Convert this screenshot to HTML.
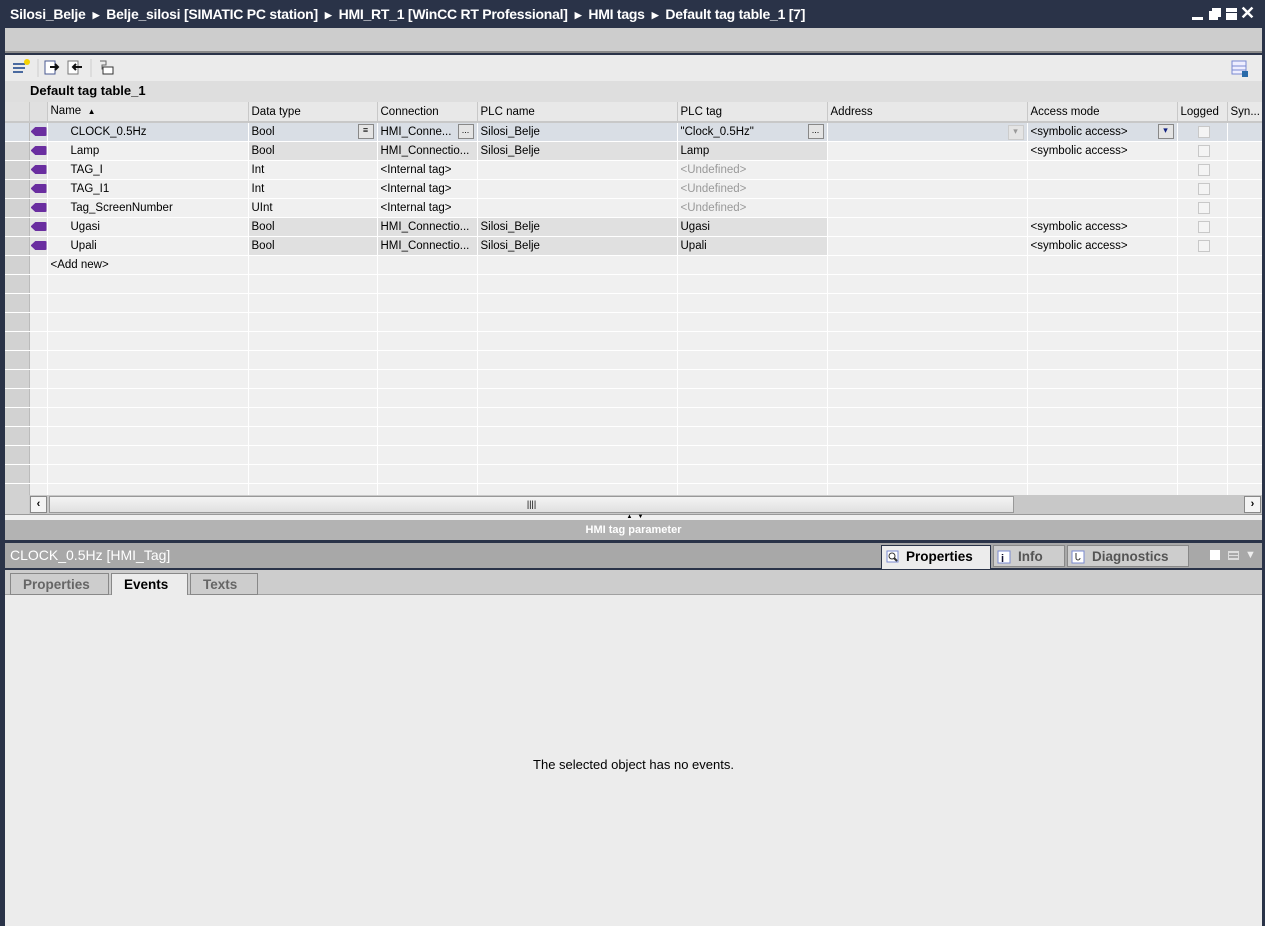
<!DOCTYPE html>
<html><head><meta charset="utf-8"><style>
*{box-sizing:border-box;margin:0;padding:0}
body{width:1265px;height:926px;overflow:hidden;background:#2a3348;font-family:"Liberation Sans",sans-serif;font-size:12px;color:#000;position:relative}
.abs{position:absolute}
#title{left:0;top:0;width:1265px;height:28px;color:#fff;font-size:14px;font-weight:bold;padding:6px 0 0 10px;letter-spacing:-0.25px;white-space:nowrap}
#title span.a{font-size:9px;margin:0 7px;position:relative;top:-1px}
#band{left:5px;top:28px;width:1257px;height:25px;background:#cdcdcd;border-bottom:2px solid #8a8a8a}
#tb{left:5px;top:55px;width:1257px;height:26px;background:#ebebeb}
#tt{left:5px;top:81px;width:1257px;height:21px;background:#dedede;font-weight:bold;font-size:13px;padding:2px 0 0 25px}
#grid{left:5px;top:102px;width:1257px;height:393px;overflow:hidden;background:#f0f0f0}
table{border-collapse:collapse;table-layout:fixed;width:1257px}
td{height:19px;line-height:18px;vertical-align:middle;border-right:1px solid #fff;border-bottom:1px solid #fff;padding:0 3px;white-space:nowrap;overflow:hidden;background:#f0f0f0;font-size:11.5px}
tr.h td{background:#e8e8e8;border-right:1px solid #c8c8c8;border-bottom:2px solid #c8c8c8;height:19px}
td.rh{background:#d2d2d2;border-right:1px solid #bbb}
td.ic{background:#e4e4e4;padding:0 1px}
td.g{background:#e0e0e0}
tr.sel td{background:#d9dee5}
td.u{color:#999}
.ico{display:inline-block;width:16px;height:9px;background:#6a2ea0;border-radius:1px 2px 2px 1px;position:relative;top:1px;clip-path:polygon(30% 0,100% 0,100% 100%,30% 100%,0 50%)}
.cb{display:inline-block;width:12px;height:12px;border:1px solid #c8c8c8;background:#f4f4f4;margin-left:17px;vertical-align:middle}
.btn{float:right;width:16px;height:15px;border:1px solid #888;background:#e4e4e4;font-size:9px;text-align:center;line-height:11px;margin-top:1px}
#sb{left:29px;top:495px;width:1233px;height:19px;background:#c8c8c8}
#spl{left:5px;top:514px;width:1257px;height:6px;background:#f0f0f0;border-top:1px solid #999}
#hp{left:5px;top:520px;width:1257px;height:20px;background:#b3b3b3;color:#fff;font-weight:bold;font-size:11px;text-align:center;padding-top:4px}
#ph{left:5px;top:543px;width:1257px;height:25px;background:#a8a8a8;color:#fff;font-size:14px;padding:4px 0 0 5px}
#tabs{left:5px;top:570px;width:1257px;height:25px;background:#cdcdcd;border-bottom:1px solid #a0a0a0}
.tab{position:absolute;top:3px;height:22px;border:1px solid #888;background:#cdcdcd;font-size:13.5px;font-weight:bold;color:#666;padding:3px 0 0 12px}
#content{left:5px;top:595px;width:1257px;height:331px;background:#ececec}
.ptab{position:absolute;top:3px;height:22px;font-size:13.5px;font-weight:bold;color:#333;padding:3px 0 0 24px;background:#cdcdcd;border:1px solid #888}
</style></head><body>
<div id="title" class="abs">Silosi_Belje<span class="a">▶</span>Belje_silosi [SIMATIC PC station]<span class="a">▶</span>HMI_RT_1 [WinCC RT Professional]<span class="a">▶</span>HMI tags<span class="a">▶</span>Default tag table_1 [7]</div>
<div class="abs" style="left:1192px;top:8px;width:60px;height:14px">
<div class="abs" style="left:0;top:9px;width:11px;height:3px;background:#fff"></div>
<div class="abs" style="left:17px;top:3px;width:9px;height:9px;background:#fff"></div><div class="abs" style="left:20px;top:0;width:9px;height:3px;background:#fff"></div><div class="abs" style="left:26px;top:0;width:3px;height:9px;background:#fff"></div>
<div class="abs" style="left:34px;top:0;width:11px;height:12px;background:#fff;border-top:3px solid #fff"><div style="margin-top:1px;height:1px;background:#2a3348"></div></div>
<div class="abs" style="left:48px;top:-4px;color:#fff;font-size:18px;font-weight:bold;line-height:18px">✕</div>
</div>
<div id="band" class="abs"></div>
<div id="tb" class="abs">
<svg width="110" height="26" style="position:absolute;left:5px;top:0">
<rect x="3" y="8" width="12" height="2" fill="#4a6aa0"/><rect x="3" y="12" width="12" height="2" fill="#4a6aa0"/><rect x="3" y="16" width="10" height="2" fill="#4a6aa0"/><circle cx="17" cy="7" r="3" fill="#f5d200"/>
<line x1="28" y1="4" x2="28" y2="22" stroke="#ccc"/>
<rect x="35" y="6" width="10" height="13" fill="#fff" stroke="#4a5a90"/><path d="M40 12h8M45 9l3 3-3 3" stroke="#111" stroke-width="2" fill="none"/>
<rect x="58" y="6" width="10" height="13" fill="#fff" stroke="#777"/><path d="M72 12h-9M66 9l-3 3 3 3" stroke="#111" stroke-width="2" fill="none"/>
<line x1="81" y1="4" x2="81" y2="22" stroke="#ccc"/>
<path d="M90 6h6v4h-4v4h10" stroke="#666" fill="none"/><rect x="93" y="12" width="10" height="7" fill="#fff" stroke="#333"/>
</svg>
<svg width="18" height="18" style="position:absolute;left:1226px;top:5px"><rect x="1" y="1" width="14" height="13" fill="#eef" stroke="#7a8ad0"/><line x1="1" y1="6" x2="15" y2="6" stroke="#7a8ad0"/><line x1="1" y1="10" x2="15" y2="10" stroke="#7a8ad0"/><rect x="11" y="11" width="6" height="6" fill="#2a6aa8"/></svg>
</div>
<div id="tt" class="abs">Default tag table_1</div>
<div id="grid" class="abs">
<table>
<colgroup><col style="width:24px"><col style="width:18px"><col style="width:201px"><col style="width:129px"><col style="width:100px"><col style="width:200px"><col style="width:150px"><col style="width:200px"><col style="width:150px"><col style="width:50px"><col style="width:35px"></colgroup>
<tr class="h"><td class="rh" style="background:#e0e0e0"></td><td style="background:#e0e0e0"></td><td>Name &nbsp;<span style="font-size:8px">▲</span></td><td>Data type</td><td>Connection</td><td>PLC name</td><td>PLC tag</td><td>Address</td><td>Access mode</td><td>Logged</td><td>Syn...</td></tr>
<tr class="sel"><td class="rh"></td><td class="ic"><span class="ico"></span></td><td style="padding-left:23px">CLOCK_0.5Hz</td><td>Bool<span class="btn">≡</span></td><td>HMI_Conne...<span class="btn">...</span></td><td>Silosi_Belje</td><td>"Clock_0.5Hz"<span class="btn">...</span></td><td><span class="btn" style="border-color:#ccc;color:#999">▾</span></td><td>&lt;symbolic access&gt;<span class="btn" style="color:#102080">▾</span></td><td><span class="cb"></span></td><td></td></tr>
<tr><td class="rh"></td><td class="ic"><span class="ico"></span></td><td style="padding-left:23px">Lamp</td><td class="g">Bool</td><td class="g">HMI_Connectio...</td><td class="g">Silosi_Belje</td><td class="g">Lamp</td><td></td><td>&lt;symbolic access&gt;</td><td><span class="cb"></span></td><td></td></tr>
<tr><td class="rh"></td><td class="ic"><span class="ico"></span></td><td style="padding-left:23px">TAG_I</td><td>Int</td><td>&lt;Internal tag&gt;</td><td></td><td class="u">&lt;Undefined&gt;</td><td></td><td></td><td><span class="cb"></span></td><td></td></tr>
<tr><td class="rh"></td><td class="ic"><span class="ico"></span></td><td style="padding-left:23px">TAG_I1</td><td>Int</td><td>&lt;Internal tag&gt;</td><td></td><td class="u">&lt;Undefined&gt;</td><td></td><td></td><td><span class="cb"></span></td><td></td></tr>
<tr><td class="rh"></td><td class="ic"><span class="ico"></span></td><td style="padding-left:23px">Tag_ScreenNumber</td><td>UInt</td><td>&lt;Internal tag&gt;</td><td></td><td class="u">&lt;Undefined&gt;</td><td></td><td></td><td><span class="cb"></span></td><td></td></tr>
<tr><td class="rh"></td><td class="ic"><span class="ico"></span></td><td style="padding-left:23px">Ugasi</td><td class="g">Bool</td><td class="g">HMI_Connectio...</td><td class="g">Silosi_Belje</td><td class="g">Ugasi</td><td></td><td>&lt;symbolic access&gt;</td><td><span class="cb"></span></td><td></td></tr>
<tr><td class="rh"></td><td class="ic"><span class="ico"></span></td><td style="padding-left:23px">Upali</td><td class="g">Bool</td><td class="g">HMI_Connectio...</td><td class="g">Silosi_Belje</td><td class="g">Upali</td><td></td><td>&lt;symbolic access&gt;</td><td><span class="cb"></span></td><td></td></tr>
<tr><td class="rh"></td><td class="ic" style="background:#f0f0f0"></td><td>&lt;Add new&gt;</td><td></td><td></td><td></td><td></td><td></td><td></td><td></td><td></td></tr>
<tr><td class="rh"></td><td></td><td></td><td></td><td></td><td></td><td></td><td></td><td></td><td></td><td></td></tr>
<tr><td class="rh"></td><td></td><td></td><td></td><td></td><td></td><td></td><td></td><td></td><td></td><td></td></tr>
<tr><td class="rh"></td><td></td><td></td><td></td><td></td><td></td><td></td><td></td><td></td><td></td><td></td></tr>
<tr><td class="rh"></td><td></td><td></td><td></td><td></td><td></td><td></td><td></td><td></td><td></td><td></td></tr>
<tr><td class="rh"></td><td></td><td></td><td></td><td></td><td></td><td></td><td></td><td></td><td></td><td></td></tr>
<tr><td class="rh"></td><td></td><td></td><td></td><td></td><td></td><td></td><td></td><td></td><td></td><td></td></tr>
<tr><td class="rh"></td><td></td><td></td><td></td><td></td><td></td><td></td><td></td><td></td><td></td><td></td></tr>
<tr><td class="rh"></td><td></td><td></td><td></td><td></td><td></td><td></td><td></td><td></td><td></td><td></td></tr>
<tr><td class="rh"></td><td></td><td></td><td></td><td></td><td></td><td></td><td></td><td></td><td></td><td></td></tr>
<tr><td class="rh"></td><td></td><td></td><td></td><td></td><td></td><td></td><td></td><td></td><td></td><td></td></tr>
<tr><td class="rh"></td><td></td><td></td><td></td><td></td><td></td><td></td><td></td><td></td><td></td><td></td></tr>
<tr><td class="rh"></td><td></td><td></td><td></td><td></td><td></td><td></td><td></td><td></td><td></td><td></td></tr>
</table></div>
<div class="abs" style="left:5px;top:495px;width:24px;height:19px;background:#d2d2d2"></div>
<div id="sb" class="abs">
<div class="abs" style="left:1px;top:1px;width:17px;height:17px;border:1px solid #888;background:#f4f4f4;font-size:11px;text-align:center;font-weight:bold;line-height:15px">‹</div>
<div class="abs" style="left:20px;top:1px;width:965px;height:17px;border:1px solid #999;background:linear-gradient(#f4f4f4,#e0e0e0);text-align:center;font-size:9px;line-height:15px">||||</div>
<div class="abs" style="left:1215px;top:1px;width:17px;height:17px;border:1px solid #888;background:#f4f4f4;font-size:11px;text-align:center;font-weight:bold;line-height:15px">›</div>
</div>
<div id="spl" class="abs"><div class="abs" style="left:600px;top:0;width:60px;height:5px;font-size:6px;text-align:center;line-height:5px">▲ &nbsp; ▼</div></div>
<div id="hp" class="abs">HMI tag parameter</div>
<div id="ph" class="abs">CLOCK_0.5Hz [HMI_Tag]</div>
<div class="ptab" style="left:881px;top:545px;width:110px;height:25px;background:#ececec;color:#000;border-color:#2a3348">Properties</div>
<div class="ptab" style="left:993px;top:545px;width:72px;color:#555">Info</div>
<div class="ptab" style="left:1067px;top:545px;width:122px;color:#555">Diagnostics</div>
<svg class="abs" style="left:886px;top:550px" width="14" height="14"><rect x="1" y="1" width="11" height="11" fill="#fff" stroke="#7a8ad0"/><circle cx="6" cy="6" r="3" fill="none" stroke="#333"/><line x1="8" y1="8" x2="11" y2="11" stroke="#333" stroke-width="2"/></svg>
<svg class="abs" style="left:997px;top:550px" width="14" height="14"><rect x="1" y="1" width="12" height="12" fill="#fff" stroke="#7a8ad0"/><text x="4" y="12" font-size="11" font-weight="bold" fill="#113">i</text></svg>
<svg class="abs" style="left:1071px;top:550px" width="14" height="14"><rect x="1" y="1" width="12" height="12" fill="#fff" stroke="#7a8ad0"/><path d="M5 3v5a2 2 0 004 0" stroke="#333" fill="none"/></svg>
<div class="abs" style="left:1210px;top:550px;width:10px;height:10px;background:#fff"></div>
<div class="abs" style="left:1228px;top:551px;width:11px;height:9px;border:1px solid #ddd;background:repeating-linear-gradient(#ddd 0 1px,transparent 1px 3px)"></div>
<div class="abs" style="left:1245px;top:549px;color:#eee;font-size:11px">▼</div>
<div id="tabs" class="abs">
<div class="tab" style="left:5px;width:99px">Properties</div>
<div class="tab" style="left:106px;width:77px;background:#ececec;color:#000;height:23px">Events</div>
<div class="tab" style="left:185px;width:68px">Texts</div>
</div>
<div id="content" class="abs"><div class="abs" style="left:0;top:162px;width:1257px;text-align:center;font-size:13px">The selected object has no events.</div></div>
</body></html>
